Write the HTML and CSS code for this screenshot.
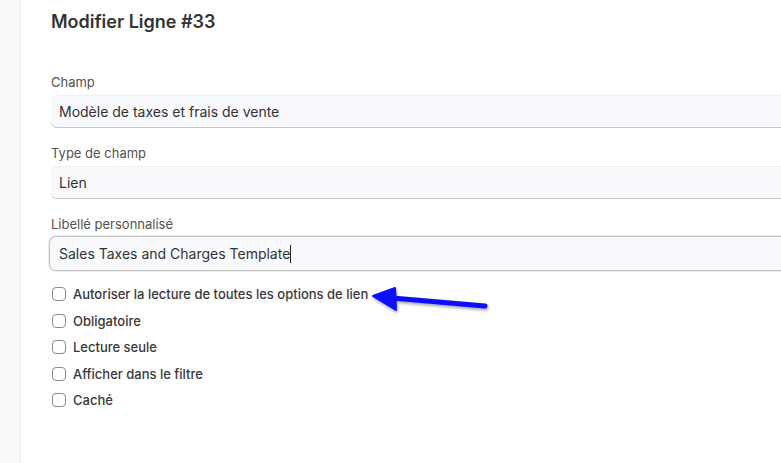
FILE: index.html
```html
<!DOCTYPE html>
<html lang="fr">
<head>
<meta charset="utf-8">
<link rel="stylesheet" href="styles.css">
</head>
<body>
<div class="page">
  <aside class="sidebar"></aside>
  <main class="main">
    <h1 class="title">Modifier Ligne #33</h1>
    <div class="form">
      <div class="field">
        <label class="label">Champ</label>
        <div class="control">Modèle de taxes et frais de vente</div>
      </div>
      <div class="field">
        <label class="label">Type de champ</label>
        <div class="control">Lien</div>
      </div>
      <div class="field">
        <label class="label">Libellé personnalisé</label>
        <div class="control focused">Sales Taxes and Charges Template<span class="caret"></span></div>
      </div>
      <div class="checks">
        <label class="check"><span class="box"></span>Autoriser la lecture de toutes les options de lien</label>
        <label class="check"><span class="box"></span>Obligatoire</label>
        <label class="check"><span class="box"></span>Lecture seule</label>
        <label class="check"><span class="box"></span>Afficher dans le filtre</label>
        <label class="check"><span class="box"></span>Caché</label>
      </div>
    </div>
  </main>
  <svg class="arrow" width="781" height="463" viewBox="0 0 781 463">
    <defs>
      <filter id="sh" x="-20%" y="-50%" width="140%" height="200%">
        <feDropShadow dx="1" dy="2" stdDeviation="1.5" flood-color="#000" flood-opacity="0.35"/>
      </filter>
    </defs>
    <g filter="url(#sh)" fill="#0a0aff" stroke="#0a0aff" stroke-linejoin="round" stroke-linecap="round">
      <line x1="392" y1="298" x2="485" y2="306" stroke-width="5"/>
      <path d="M373 296 L395 288 L396 310 Z" stroke-width="2"/>
    </g>
  </svg>
</div>
</body>
</html>
```
FILE: styles.css
```css
* { box-sizing: border-box; }
html, body { margin: 0; padding: 0; }
body {
  font-family: Inter, "Noto Sans", sans-serif;
  background: #ffffff;
  color: #333;
  width: 781px;
  height: 463px;
  overflow: hidden;
}
.page {
  position: relative;
  display: flex;
  height: 463px;
}
.sidebar {
  width: 21px;
  flex: none;
  background: #f8f9fb;
  border-right: 1px solid #eef0f3;
}
.main {
  flex: 1;
  padding: 0 0 0 30px;
  min-width: 0;
}
.title {
  margin: 10px 0 0;
  font-size: 18px;
  font-weight: 600;
  line-height: 24px;
  color: #333;
  letter-spacing: 0;
}
.form {
  margin-top: 40px;
  width: 760px;
}
.field { margin-bottom: 17px; }
.label {
  display: block;
  font-size: 13px;
  line-height: 16px;
  color: #525252;
  margin-bottom: 6px;
}
.control {
  height: 32px;
  background: #f8f9fc;
  border-radius: 6px;
  padding: 0 8px;
  font-size: 14px;
  line-height: 32px;
  color: #333;
  box-shadow: inset 0 -1px 0 #c8c8c8, 0 -1px 0 #f0f0f0;
}
.control.focused {
  height: 35px;
  margin-left: -2px;
  padding-left: 9px;
  line-height: 33px;
  border: 1px solid #c4c4c4;
  box-shadow: 0 0 0 1px #ececec;
  border-radius: 7px;
  margin-top: -2px;
}
.caret {
  display: inline-block;
  width: 1px;
  height: 18px;
  background: #222;
  vertical-align: -4px;
}
.checks {
  display: flex;
  flex-direction: column;
  gap: 10.5px;
  margin-top: -2px;
}
.check {
  display: flex;
  align-items: center;
  gap: 7px;
  font-size: 13px;
  font-weight: 500;
  line-height: 16px;
  color: #383838;
}
.box {
  width: 14px;
  height: 14px;
  border: 1px solid #8a8a8a;
  border-radius: 4px;
  background: #fff;
  flex: none;
  margin-left: 1px;
}
.arrow {
  position: absolute;
  left: 0;
  top: 0;
  pointer-events: none;
}
```
